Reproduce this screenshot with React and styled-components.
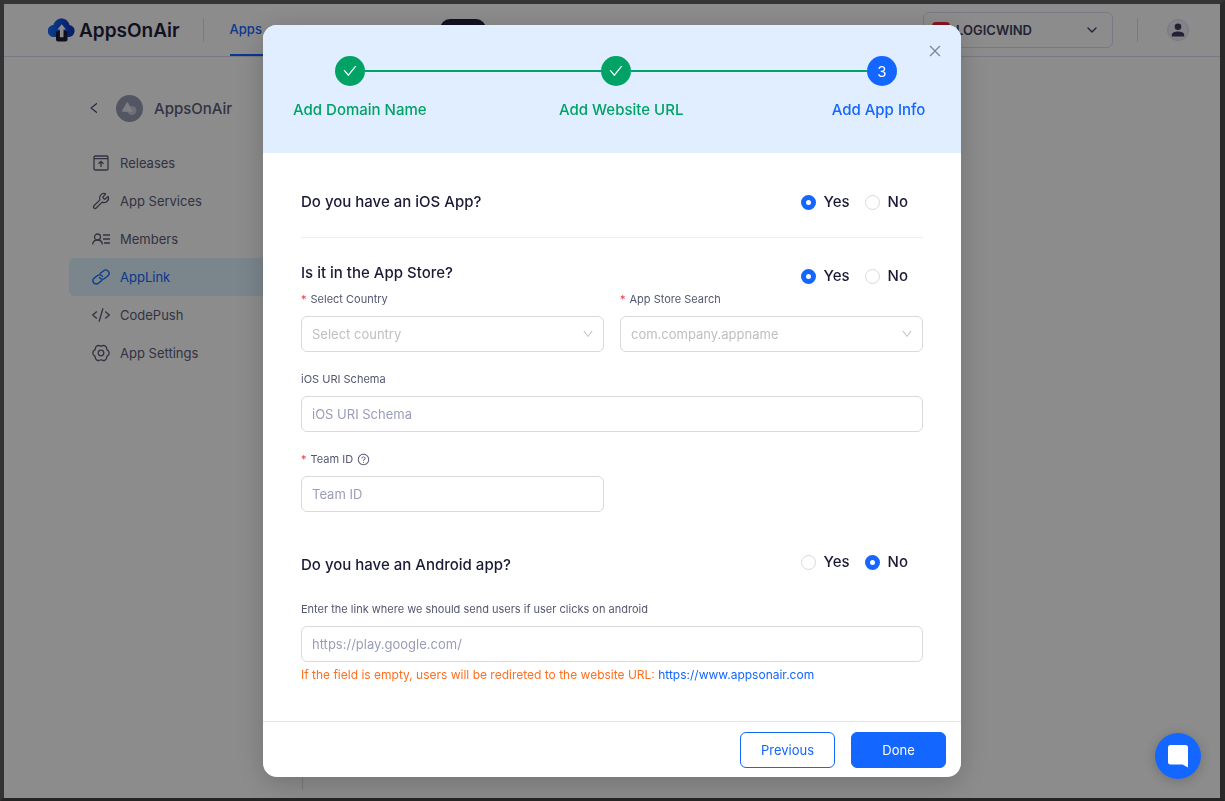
import React, { useState } from "react";
import styled, { createGlobalStyle, css } from "styled-components";
import {
  AiOutlineCheck,
  AiOutlineClose,
  AiOutlineDown,
  AiOutlineLeft,
  AiOutlineQuestionCircle,
} from "react-icons/ai";
import { ChevronDown, Wrench } from "lucide-react";

const GlobalStyle = createGlobalStyle`
  * {
    box-sizing: border-box;
  }
  body {
    margin: 0;
    font-family: Inter, "Liberation Sans", sans-serif;
    font-size: 13px;
    color: #1a1a37;
  }
  button, input, select {
    font-family: inherit;
  }
`;

const Page = styled.div`
  display: flex;
  flex-direction: column;
  min-height: 100vh;
  background-color: #ffffff;
  border-style: solid;
  border-width: 4px 5px 3px 4px;
  border-color: #353535 #2a2a2a #242424 #333333;
`;

/* header */

const Header = styled.header`
  display: flex;
  align-items: center;
  height: 53px;
  padding: 0 31px 0 44px;
  border-bottom: 1px solid #dcdcee;
`;

const Brand = styled.a`
  display: flex;
  align-items: center;
  gap: 4px;
  font-size: 19px;
  font-weight: 600;
  color: #1f1f3d;
  text-decoration: none;
`;

const Divider = styled.span`
  width: 1px;
  height: 24px;
  background-color: #dcdcee;
`;

const HeaderNav = styled.nav`
  display: flex;
  align-items: center;
  flex: 1;
  gap: 26px;
  height: 100%;
  margin-left: 23px;
`;

const HeaderLink = styled.a`
  display: flex;
  align-items: center;
  height: 100%;
  width: 120px;
  border-bottom: 2px solid #1366ff;
  font-size: 13px;
  font-weight: 500;
  color: #1366ff;
  text-decoration: none;
`;

const PlanPill = styled.span`
  width: 46px;
  height: 22px;
  margin-left: 64px;
  border-radius: 10px;
  background-color: #1f1f3d;
`;

const CompanyBox = styled.div`
  display: flex;
  align-items: center;
  gap: 6px;
  width: 190px;
  height: 36px;
  margin-right: 24px;
  padding: 0 12px 0 8px;
  border: 1px solid #dcdcee;
  border-radius: 6px;
  color: #3f3f60;
`;

const CompanyLogo = styled.span`
  width: 18px;
  height: 16px;
  border-radius: 4px;
  background-color: #f0283c;
`;

const CompanySelect = styled.select`
  flex: 1;
  min-width: 0;
  border: none;
  background: none;
  appearance: none;
  outline: none;
  font-size: 13px;
  font-weight: 600;
  color: #3f3f60;
`;

const Avatar = styled.button`
  display: flex;
  align-items: center;
  justify-content: center;
  width: 22px;
  height: 22px;
  margin-left: 29px;
  padding: 0;
  border: 1px solid #dcdcee;
  border-radius: 50%;
  background-color: #eeeef8;
  cursor: pointer;
`;

/* sidebar */

const Sidebar = styled.aside`
  display: flex;
  flex-direction: column;
  flex: 1;
  width: 234px;
  margin: 0 0 8px 65px;
  padding-top: 37px;
  border-right: 1px solid #dcdcee;
`;

const AppTitle = styled.div`
  display: flex;
  align-items: center;
  height: 28px;
  margin: 0 0 22px 18px;
  font-size: 15px;
  font-weight: 500;
  color: #5c5d78;
`;

const BackButton = styled.button`
  display: flex;
  padding: 0;
  border: none;
  background: none;
  color: #3f3f60;
  cursor: pointer;
`;

const AppIcon = styled.span`
  display: flex;
  margin: 0 11px 0 15px;
`;

const NavItem = styled.a`
  display: flex;
  align-items: center;
  gap: 10px;
  height: 38px;
  padding-left: 23px;
  border-radius: 6px 0 0 6px;
  font-size: 13px;
  color: ${({ $active }) => ($active ? "#1366ff" : "#5c5d78")};
  background-color: ${({ $active }) => ($active ? "#dff3ff" : "transparent")};
  text-decoration: none;
`;

/* modal */

const Overlay = styled.div`
  position: fixed;
  inset: 4px 5px 3px 4px;
  display: flex;
  align-items: flex-start;
  justify-content: center;
  padding-top: 21px;
  overflow: auto;
  background-color: rgba(0, 0, 0, 0.45);
`;

const Modal = styled.section`
  width: 100%;
  max-width: 698px;
  border-radius: 14px;
  background-color: #ffffff;
  box-shadow: 0 6px 30px rgba(0, 0, 0, 0.2);
`;

const ModalHead = styled.div`
  position: relative;
  height: 128px;
  padding: 31px 23px 0 30px;
  border-radius: 14px 14px 0 0;
  background-color: #e1eeff;
`;

const CloseButton = styled.button`
  position: absolute;
  top: 18px;
  right: 18px;
  display: flex;
  padding: 0;
  border: none;
  background: none;
  color: #808894;
  cursor: pointer;
`;

const Steps = styled.ol`
  display: flex;
  margin: 0;
  padding: 0;
  list-style: none;
`;

const Step = styled.li`
  flex: 1;
  color: ${({ $current }) => ($current ? "#1366ff" : "#00a365")};
  &:last-child {
    flex: 0 0 113px;
  }
`;

const StepTrack = styled.div`
  display: flex;
  align-items: center;
  margin: 0 -42px 12px 42px;
`;

const StepIcon = styled.span`
  display: flex;
  align-items: center;
  justify-content: center;
  width: 30px;
  height: 30px;
  border-radius: 50%;
  background-color: currentColor;
  font-size: 15px;
  & > * {
    color: #ffffff;
  }
`;

const StepTail = styled.span`
  flex: 1;
  height: 2px;
  background-color: #00a365;
`;

const StepTitle = styled.div`
  width: 113px;
  padding-right: 6px;
  font-size: 15px;
  font-weight: 500;
  line-height: 24px;
  text-align: center;
  white-space: nowrap;
`;

const ModalBody = styled.form`
  padding: 37px 38px 36px;
`;

const Question = styled.fieldset`
  display: flex;
  justify-content: space-between;
  align-items: ${({ $align }) => $align || "center"};
  min-width: 0;
  height: ${({ $align }) => ($align ? "27px" : "24px")};
  margin: 0;
  padding: 0;
  border: none;
`;

const QuestionText = styled.h3`
  align-self: ${({ $align }) => $align || "center"};
  margin: 0;
  font-size: 15px;
  font-weight: 500;
  line-height: 24px;
`;

const RadioGroup = styled.div`
  display: flex;
`;

const RadioLabel = styled.label`
  display: flex;
  align-items: center;
  gap: 8px;
  padding-right: 15px;
  font-size: 15px;
  font-weight: 500;
  line-height: 24px;
  cursor: pointer;
`;

const Radio = styled.input`
  appearance: none;
  width: 15px;
  height: 15px;
  margin: 0;
  border: 1px solid #d9d9d9;
  border-radius: 50%;
  background-color: #ffffff;
  &:checked {
    border: 5px solid #1366ff;
  }
`;

const Line = styled.hr`
  height: 1px;
  margin: 23px 0;
  border: none;
  background-color: #eeeeee;
`;

const FieldGrid = styled.div`
  display: grid;
  grid-template-columns: 1fr 1fr;
  gap: 18px 16px;
  margin: ${({ $last }) => ($last ? "23px 0 0" : "2px 0 38px")};
`;

const Field = styled.div`
  grid-column: ${({ $wide }) => ($wide ? "1 / -1" : "auto")};
`;

const Label = styled.label`
  display: flex;
  align-items: center;
  gap: 4px;
  margin-bottom: 8px;
  font-size: 11px;
  line-height: 18px;
  color: #54576f;
`;

const Required = styled.span`
  color: #ff2d3f;
`;

const controlStyle = css`
  display: block;
  width: 100%;
  height: 36px;
  padding: 0 10px;
  border: 1px solid #d9d9d9;
  border-radius: 6px;
  background-color: #ffffff;
  font-size: 13px;
  outline: none;
  &:focus {
    border-color: #1366ff;
  }
`;

const Input = styled.input`
  ${controlStyle}
  &::placeholder {
    color: #9a9db8;
    opacity: 1;
  }
`;

const SelectBox = styled.div`
  position: relative;
  & > svg {
    position: absolute;
    top: 12px;
    right: 10px;
    color: #bfbfbf;
    pointer-events: none;
  }
`;

const Select = styled.select`
  ${controlStyle}
  appearance: none;
  color: #bfbfbf;
`;

const Hint = styled.p`
  margin: 3px 0 0;
  font-size: 12px;
  line-height: 20px;
  color: #ff6f1f;
`;

const HintLink = styled.a`
  color: #1366ff;
  text-decoration: none;
`;

const ModalFoot = styled.div`
  display: flex;
  justify-content: flex-end;
  gap: 16px;
  padding: 10px 15px 9px;
  border-top: 1px solid #e6e6e6;
`;

const Button = styled.button`
  width: 95px;
  height: 36px;
  border: 1px solid #1366ff;
  border-radius: 6px;
  background-color: ${({ $primary }) => ($primary ? "#1366ff" : "#ffffff")};
  font-size: 13px;
  color: ${({ $primary }) => ($primary ? "#ffffff" : "#1366ff")};
  cursor: pointer;
`;

const ChatButton = styled.button`
  position: fixed;
  right: 24px;
  bottom: 22px;
  display: flex;
  align-items: center;
  justify-content: center;
  width: 46px;
  height: 46px;
  padding: 0;
  border: none;
  border-radius: 50%;
  background-color: #1366ff;
  box-shadow: 0 2px 12px rgba(0, 0, 0, 0.2);
  cursor: pointer;
`;

/* icons */

const LogoIcon = () => (
  <svg width="27" height="24" viewBox="0 0 27 24">
    <defs>
      <linearGradient id="cloud" x1="0" x2="1">
        <stop offset="0" stopColor="#1370ff" />
        <stop offset="1" stopColor="#1230b8" />
      </linearGradient>
    </defs>
    <path
      d="M6 19a6 6 0 0 1-.6-12C6.6 3.2 9.8.6 13.5.6c3.800 0 7 2.600 8 6.300A6.100 6.100 0 0 1 21 19z"
      fill="url(#cloud)"
    />
    <path
      d="M10 13h7.500a2 2 0 0 1 2 2v6.500a2 2 0 0 1-2 2H10a2 2 0 0 1-2-2V15a2 2 0 0 1 2-2z"
      fill="#1a1a33"
    />
    <path d="M13.700 6.200l4.300 5.300h-2.500v7.700h-3.600v-7.700H9.400z" fill="#ffffff" />
  </svg>
);

const ReleaseIcon = () => (
  <svg width="18" height="18" viewBox="0 0 18 18" fill="none" stroke="currentColor" strokeWidth="1.3">
    <rect x="2" y="2" width="14" height="14" rx="1.2" />
    <path d="M2 4.600h14M9 13V7.600M6.500 9.800L9 7.300l2.500 2.500" />
  </svg>
);

const MembersIcon = () => (
  <svg width="18" height="18" viewBox="0 0 18 18" fill="none" stroke="currentColor" strokeWidth="1.3">
    <circle cx="5.500" cy="7" r="3" />
    <path d="M.6 14.500c.3-2.800 2.300-4.500 4.900-4.500s4.600 1.700 4.900 4.500M11 5h7M11 9h7M12 13h6" />
  </svg>
);

const LinkIcon = () => (
  <svg width="18" height="18" viewBox="0 0 18 18" fill="none" stroke="currentColor" strokeWidth="1.3">
    <g transform="rotate(-38 9 9)">
      <path d="M8 12.300H3a3.300 3.300 0 0 1 0-6.600h4.200a3.300 3.300 0 0 1 3.100 4.400" />
      <path d="M10 5.700h5a3.300 3.300 0 0 1 0 6.600h-4.200a3.300 3.300 0 0 1-3.100-4.400" />
    </g>
  </svg>
);

const CodeIcon = () => (
  <svg width="18" height="18" viewBox="0 0 18 18" fill="none" stroke="currentColor" strokeWidth="1.3">
    <path d="M4.800 5.500L.8 9l4 3.500M13.200 5.500l4 3.500-4 3.500M11 2.200L7 15.800" />
  </svg>
);

const SettingsIcon = () => (
  <svg width="18" height="18" viewBox="0 0 18 18" fill="none" stroke="currentColor" strokeWidth="1.3">
    <path d="M14.900 5.600C18 7.500 18 10.500 14.900 12.400C14.800 16 12.200 17.500 9 15.800C5.800 17.500 3.200 16 3.100 12.400C0 10.500 0 7.500 3.100 5.600C3.200 2 5.800.5 9 2.200C12.200.5 14.800 2 14.900 5.600z" />
    <circle cx="9" cy="9" r="2.800" />
  </svg>
);

const AppAvatar = () => (
  <svg width="27" height="27" viewBox="0 0 27 27">
    <circle cx="13.500" cy="13.500" r="13.500" fill="#9a9cb4" />
    <circle cx="15.800" cy="15.500" r="4.600" fill="#c9cad8" />
    <path d="M11.300 7.500l5 8.700H6.300z" fill="#e6e6ee" stroke="#e6e6ee" strokeLinejoin="round" />
  </svg>
);

const UserIcon = () => (
  <svg width="14" height="14" viewBox="0 0 14 14" fill="#3f3f60">
    <circle cx="7" cy="3.800" r="3.300" />
    <path d="M.8 13.500v-1.700c0-2.200 3.500-3.300 6.200-3.300s6.200 1.100 6.200 3.300v1.700z" />
  </svg>
);

const ChatIcon = () => (
  <svg width="20" height="23" viewBox="0 0 20 23" fill="#ffffff">
    <path d="M2.500 0h15A2.500 2.500 0 0 1 20 2.500V22.500L14.500 19.500h-12A2.500 2.500 0 0 1 0 17V2.500A2.500 2.500 0 0 1 2.500 0z" />
  </svg>
);

const navItems = [
  { label: "Releases", icon: <ReleaseIcon /> },
  { label: "App Services", icon: <Wrench size={18} strokeWidth={1.7} /> },
  { label: "Members", icon: <MembersIcon /> },
  { label: "AppLink", icon: <LinkIcon />, active: true },
  { label: "CodePush", icon: <CodeIcon /> },
  { label: "App Settings", icon: <SettingsIcon /> },
];

const steps = ["Add Domain Name", "Add Website URL", "Add App Info"];

const YesNo = ({ name, defaultValue }) => {
  const [value, setValue] = useState(defaultValue);

  return (
    <RadioGroup>
      {["Yes", "No"].map((option) => (
        <RadioLabel key={option}>
          <Radio
            type="radio"
            name={name}
            checked={value === option}
            onChange={() => setValue(option)}
          />
          {option}
        </RadioLabel>
      ))}
    </RadioGroup>
  );
};

const SelectField = ({ id, label, placeholder }) => (
  <Field>
    <Label htmlFor={id}>
      <Required>*</Required>
      {label}
    </Label>
    <SelectBox>
      <Select id={id}>
        <option>{placeholder}</option>
      </Select>
      <AiOutlineDown size={12} />
    </SelectBox>
  </Field>
);

const App = () => {
  return (
    <>
      <GlobalStyle />
      <Page>
        <Header>
          <Brand href="#">
            <LogoIcon />
            AppsOnAir
          </Brand>
          <HeaderNav>
            <Divider />
            <HeaderLink href="#">Apps</HeaderLink>
            <PlanPill />
          </HeaderNav>
          <CompanyBox>
            <CompanyLogo />
            <CompanySelect aria-label="Company">
              <option>LOGICWIND</option>
            </CompanySelect>
            <ChevronDown size={16} />
          </CompanyBox>
          <Divider />
          <Avatar aria-label="Profile">
            <UserIcon />
          </Avatar>
        </Header>
        <Sidebar>
          <AppTitle>
            <BackButton aria-label="Back">
              <AiOutlineLeft size={14} />
            </BackButton>
            <AppIcon>
              <AppAvatar />
            </AppIcon>
            AppsOnAir
          </AppTitle>
          {navItems.map(({ label, icon, active }) => (
            <NavItem key={label} href="#" $active={active}>
              {icon}
              {label}
            </NavItem>
          ))}
        </Sidebar>
      </Page>

      <Overlay>
        <Modal role="dialog" aria-label="Add App Info">
          <ModalHead>
            <Steps>
              {steps.map((title, index) => {
                const current = index === steps.length - 1;
                return (
                  <Step key={title} $current={current}>
                    <StepTrack>
                      <StepIcon>
                        {current ? <span>{index + 1}</span> : <AiOutlineCheck size={16} />}
                      </StepIcon>
                      {!current && <StepTail />}
                    </StepTrack>
                    <StepTitle>{title}</StepTitle>
                  </Step>
                );
              })}
            </Steps>
            <CloseButton aria-label="Close">
              <AiOutlineClose size={16} />
            </CloseButton>
          </ModalHead>

          <ModalBody id="app-info" onSubmit={(e) => e.preventDefault()}>
            <Question>
              <QuestionText>Do you have an iOS App?</QuestionText>
              <YesNo name="ios" defaultValue="Yes" />
            </Question>
            <Line />
            <Question $align="flex-end">
              <QuestionText $align="flex-start">Is it in the App Store?</QuestionText>
              <YesNo name="store" defaultValue="Yes" />
            </Question>
            <FieldGrid>
              <SelectField id="country" label="Select Country" placeholder="Select country" />
              <SelectField id="search" label="App Store Search" placeholder="com.company.appname" />
              <Field $wide>
                <Label htmlFor="schema">iOS URI Schema</Label>
                <Input id="schema" placeholder="iOS URI Schema" />
              </Field>
              <Field>
                <Label htmlFor="team">
                  <Required>*</Required>
                  Team ID
                  <AiOutlineQuestionCircle size={13} />
                </Label>
                <Input id="team" placeholder="Team ID" />
              </Field>
            </FieldGrid>
            <Question $align="flex-start">
              <QuestionText $align="flex-end">Do you have an Android app?</QuestionText>
              <YesNo name="android" defaultValue="No" />
            </Question>
            <FieldGrid $last>
              <Field $wide>
                <Label htmlFor="link">
                  Enter the link where we should send users if user clicks on android
                </Label>
                <Input id="link" placeholder="https://play.google.com/" />
                <Hint>
                  If the field is empty, users will be redireted to the website URL:{" "}
                  <HintLink href="#">https://www.appsonair.com</HintLink>
                </Hint>
              </Field>
            </FieldGrid>
          </ModalBody>

          <ModalFoot>
            <Button type="button">Previous</Button>
            <Button type="submit" form="app-info" $primary>
              Done
            </Button>
          </ModalFoot>
        </Modal>
      </Overlay>

      <ChatButton aria-label="Open chat">
        <ChatIcon />
      </ChatButton>
    </>
  );
};

export default App;
